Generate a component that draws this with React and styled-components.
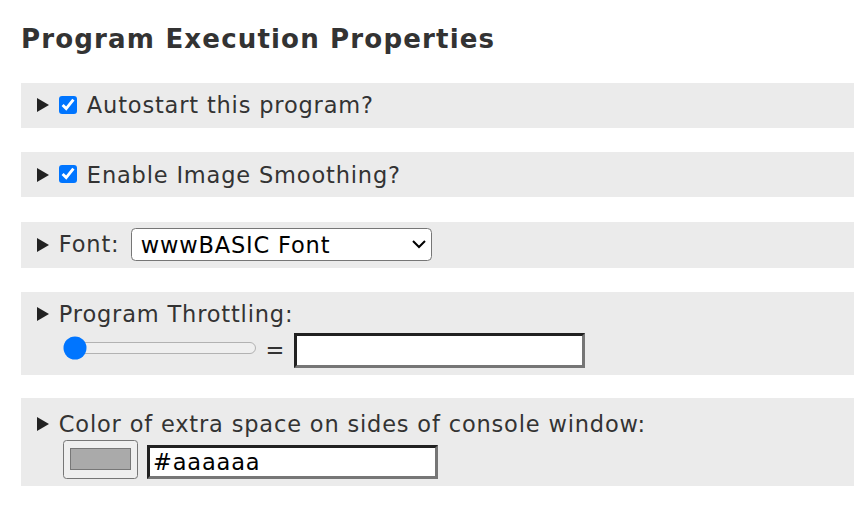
import React from 'react';
import styled, { createGlobalStyle } from 'styled-components';

const GlobalStyle = createGlobalStyle`
  html, body {
    margin: 0;
    padding: 0;
    background: #fff;
  }
  body {
    font-family: "DejaVu Sans", "Noto Sans", sans-serif;
    color: #333;
  }
`;

// the whole panel is drawn at 150% so native controls scale with the text
const Page = styled.div`
  zoom: 1.5;
  padding: 16px 0 20px 14px;
  font-size: 15px;
  letter-spacing: 0.55px;
`;

const Title = styled.h3`
  margin: 0 0 19.3px;
  font-size: 17.4px;
  line-height: 20px;
  font-weight: bold;
  letter-spacing: 0.76px;
  color: #333;
`;

const Section = styled.div`
  background: #ebebeb;
  padding: ${props => props.$padTop || 4.5}px 10.5px 4.5px;
  margin-bottom: ${props => props.$gap || 16.2}px;
`;

const Summary = styled.div`
  display: flex;
  align-items: center;
  min-height: 21px;
  line-height: 17.5px;
`;

const Marker = styled.span`
  flex: none;
  width: 0;
  height: 0;
  border-left: 8.5px solid #222;
  border-top: 4.9px solid transparent;
  border-bottom: 4.9px solid transparent;
  margin-right: 6.7px;
`;

const Check = styled.input.attrs({ type: 'checkbox' })`
  width: 13px;
  height: 13px;
  margin: 0 5.7px 0 0;
  flex: none;
`;

const FontSelect = styled.select`
  margin-left: 7.5px;
  width: 201px;
  height: 21.7px;
  font-family: "DejaVu Sans", sans-serif;
  font-size: 15px;
  letter-spacing: 0.55px;
  color: #000;
  background: #fff;
  border: 1px solid #767676;
  border-radius: 3px;
  padding: 0 2px;
`;

const Controls = styled.div`
  display: flex;
  align-items: ${props => props.$align || 'center'};
  gap: 6px;
  padding-left: 17.5px;
  margin-top: ${props => props.$top || 0}px;
`;

const Slider = styled.input.attrs({ type: 'range' })`
  width: 129px;
  margin: 0 0 4px;
`;

const Equals = styled.span`
  line-height: 17.5px;
`;

const TextField = styled.input.attrs({ type: 'text' })`
  box-sizing: border-box;
  width: 194px;
  height: ${props => props.$h || 23.3}px;
  margin: 0;
  font-family: "DejaVu Sans", sans-serif;
  font-size: 15px;
  letter-spacing: 0.55px;
  color: #000;
  padding: 1px 2px;
  border: 2px inset #767676;
  background: #fff;
`;

const ColorPicker = styled.input.attrs({ type: 'color' })`
  box-sizing: border-box;
  width: 50px;
  height: 26px;
  margin: 0;
`;

export default function App() {
  return (
    <>
      <GlobalStyle />
      <Page>
        <Title>Program Execution Properties</Title>

        <Section>
          <Summary>
            <Marker />
            <Check defaultChecked />
            Autostart this program?
          </Summary>
        </Section>

        <Section>
          <Summary>
            <Marker />
            <Check defaultChecked />
            Enable Image Smoothing?
          </Summary>
        </Section>

        <Section>
          <Summary>
            <Marker />
            Font:
            <FontSelect defaultValue="wwwbasic">
              <option value="wwwbasic">wwwBASIC Font</option>
            </FontSelect>
          </Summary>
        </Section>

        <Section $gap={15.3}>
          <Summary>
            <Marker />
            Program Throttling:
          </Summary>
          <Controls $top={2}>
            <Slider min={0} max={100} defaultValue={0} />
            <Equals>=</Equals>
            <TextField defaultValue="" />
          </Controls>
        </Section>

        <Section $padTop={7}>
          <Summary>
            <Marker />
            Color of extra space on sides of console window:
          </Summary>
          <Controls $align="flex-end">
            <ColorPicker defaultValue="#aaaaaa" />
            <TextField $h={22.7} defaultValue="#aaaaaa" />
          </Controls>
        </Section>
      </Page>
    </>
  );
}
